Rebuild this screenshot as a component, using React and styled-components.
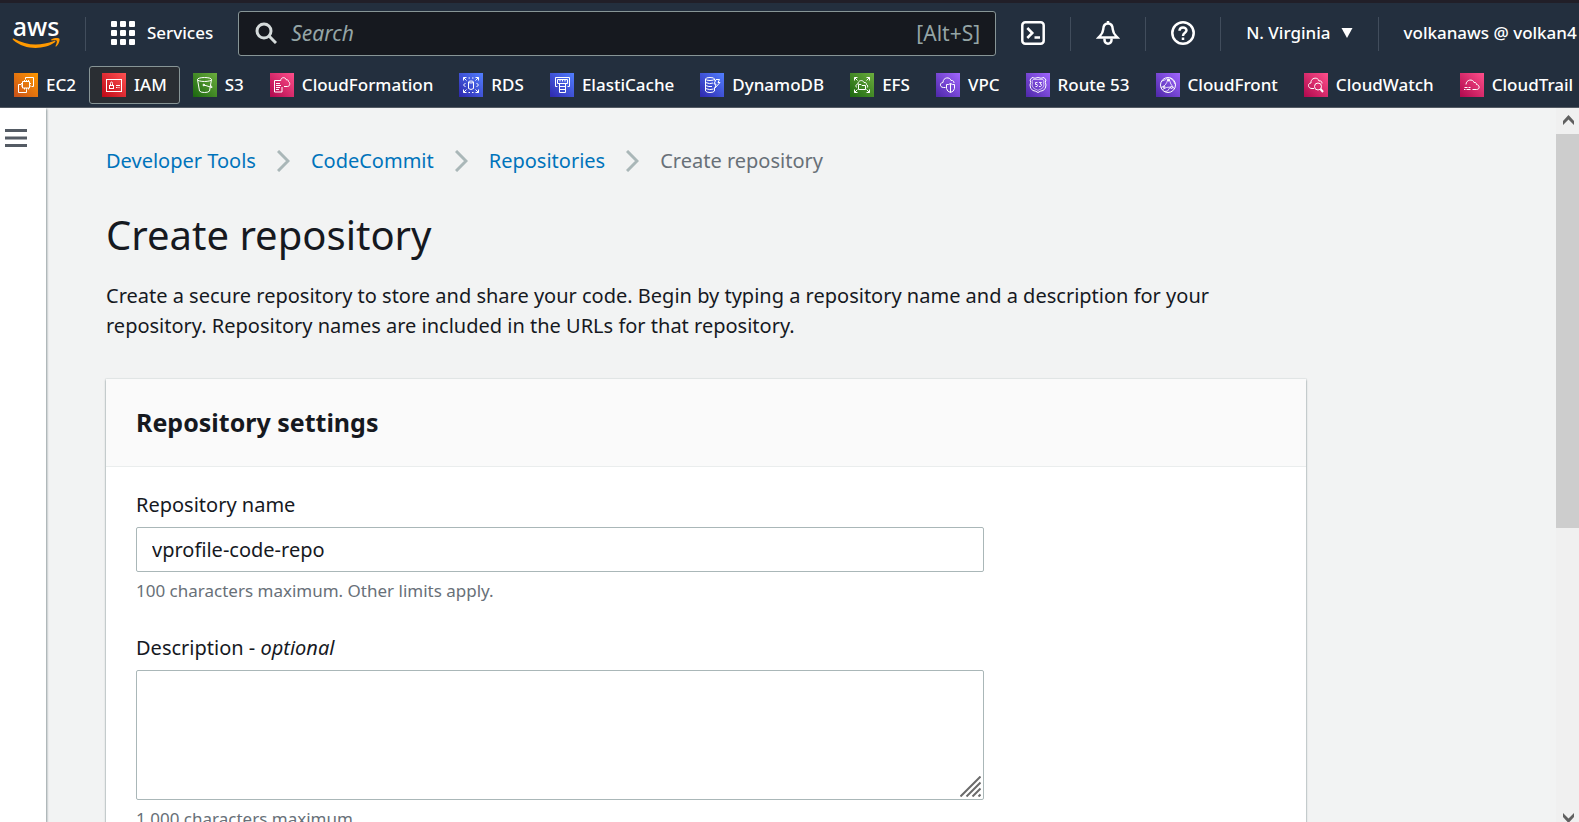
import React, { useState } from "react";
import styled, { createGlobalStyle } from "styled-components";

const GlobalStyle = createGlobalStyle`
  *, *::before, *::after { box-sizing: border-box; }
  html, body, #root { height: 100%; margin: 0; }
  body {
    font-family: "Noto Sans", "Open Sans", sans-serif;
    font-size: 20px;
    line-height: 30px;
    color: #16191f;
    background: #f2f3f3;
    overflow: hidden;
  }
  button, input, textarea { font: inherit; color: inherit; }
`;

const Page = styled.div`
  height: 100%;
  display: flex;
  flex-direction: column;
  overflow: hidden;
`;

/* ---------- header ---------- */

const Header = styled.header`
  flex: none;
  background: #232f3e;
  border-top: 3px solid #211f28;
  border-bottom: 1px solid #545b64;
  color: #fff;
  font-size: 17px;
  font-weight: 500;
  line-height: 24px;
  overflow: hidden;
`;

const TopBar = styled.div`
  display: flex;
  align-items: center;
  padding-top: 8px;
  white-space: nowrap;
`;

const Logo = styled.a`
  display: flex;
  flex-direction: column;
  align-items: center;
  flex: none;
  width: 48px;
  margin: 0 25px 2px 12px;
  color: #fff;
  font-size: 25px;
  line-height: 19px;
  text-decoration: none;
  svg { display: block; margin-top: 2px; }
`;

const Divider = styled.span`
  flex: none;
  width: 1px;
  height: 34px;
  background: #414d5c;
`;

const BarButton = styled.button`
  display: flex;
  align-items: center;
  flex: none;
  gap: ${(p) => p.$gap || 0}px;
  padding: 0 25px 1px;
  border: 0;
  background: none;
  color: #fff;
  cursor: pointer;
  svg { display: block; }
`;

const SearchBox = styled.label`
  display: flex;
  align-items: center;
  flex: 0 0 48%;
  height: 45px;
  padding: 0 15px 2px 16px;
  gap: 14px;
  border: 1px solid #879596;
  border-radius: 3px;
  background: #16191f;
  color: #95a5a6;
  font-size: 21px;
  font-weight: 400;
  svg { flex: none; }
`;

const SearchInput = styled.input`
  flex: 1;
  min-width: 0;
  padding: 0;
  border: 0;
  outline: 0;
  background: none;
  color: #fff;
  &::placeholder { color: #95a5a6; font-style: italic; opacity: 1; }
`;

const Favorites = styled.nav`
  display: flex;
  padding: 10px 0 3px 1px;
  white-space: nowrap;
`;

const Favorite = styled.a`
  display: flex;
  align-items: center;
  flex: none;
  gap: 8px;
  height: 38px;
  padding: 0 12px;
  border: 1px solid ${(p) => (p.$active ? "#879596" : "transparent")};
  border-radius: 3px;
  background: ${(p) => (p.$active ? "#2a2e33" : "transparent")};
  color: #fff;
  text-decoration: none;
`;

const TILE = {
  orange: ["#c8511b", "#f90"],
  red: ["#bd0816", "#ff5252"],
  green: ["#1b660f", "#6cae3e"],
  pink: ["#b0084d", "#ff4f8b"],
  blue: ["#2e27ad", "#527fff"],
  purple: ["#4d27a8", "#a166ff"],
};

const Tile = styled.span`
  display: block;
  width: 24px;
  height: 24px;
  background: linear-gradient(45deg, ${(p) => TILE[p.$tone][0]}, ${(p) => TILE[p.$tone][1]});
  svg { display: block; }
`;

/* ---------- body ---------- */

const Body = styled.div`
  flex: 1;
  min-height: 0;
  display: flex;
`;

const Rail = styled.aside`
  flex: none;
  width: 46px;
  padding: 21px 0 0 5px;
  background: #fff;
  box-shadow: 1px 1px 2px 0 rgba(0, 28, 36, 0.4);
`;

const MenuButton = styled.button`
  display: block;
  padding: 0;
  border: 0;
  background: none;
  cursor: pointer;
  svg { display: block; }
`;

const Main = styled.main`
  flex: 1;
  min-width: 0;
  overflow: hidden;
  padding: 38px 60px 0;
`;

const Content = styled.div`
  max-width: 1200px;
`;

const Crumbs = styled.nav`
  display: flex;
  align-items: center;
  gap: 21px;
  color: #687078;
  a { color: #0073bb; text-decoration: none; }
`;

const Title = styled.h1`
  margin: 34px 0 21px;
  font-size: 40px;
  line-height: 50px;
  font-weight: 400;
`;

const Intro = styled.p`
  margin: 0 0 38px;
`;

const Card = styled.section`
  background: #fff;
  box-shadow: 0 1px 2px 0 rgba(0, 28, 36, 0.5), 0 0 0 1px #eaeded;
`;

const CardHeader = styled.div`
  padding: 27px 30px 28px;
  background: #fafafa;
  border-bottom: 1px solid #eaeded;
`;

const CardTitle = styled.h2`
  margin: 0;
  font-size: 25px;
  line-height: 32px;
  font-weight: 700;
`;

const CardBody = styled.form`
  display: flex;
  flex-direction: column;
  gap: 30px;
  padding: 23px 30px;
`;

const Field = styled.div`
  max-width: 848px;
`;

const Label = styled.label`
  display: block;
  margin-bottom: 7px;
`;

const TextInput = styled.input`
  display: block;
  width: 100%;
  height: 45px;
  padding: 0 15px;
  border: 1px solid #aab7b8;
  border-radius: 2px;
  background: #fff;
  outline: 0;
`;

const AreaWrap = styled.div`
  position: relative;
`;

const TextArea = styled.textarea`
  display: block;
  width: 100%;
  height: 130px;
  padding: 6px 15px;
  border: 1px solid #aab7b8;
  border-radius: 2px;
  background: #fff;
  outline: 0;
  resize: none;
`;

const Grip = styled.svg`
  position: absolute;
  right: 3px;
  bottom: 3px;
`;

const Hint = styled.p`
  margin: 7px 0 0;
  color: #687078;
  font-size: 17px;
  line-height: 24px;
`;

/* ---------- scrollbar ---------- */

const Scrollbar = styled.div`
  flex: none;
  width: 23px;
  display: flex;
  flex-direction: column;
  background: #f0f0f0;
`;

const ScrollArrow = styled.div`
  flex: none;
  height: ${(p) => p.$height}px;
  padding: ${(p) => p.$top}px 0 0 7px;
  overflow: hidden;
  svg { display: block; }
`;

const ScrollThumb = styled.div`
  flex: 197;
  background: #cdcdcd;
`;

const ScrollTrack = styled.div`
  flex: 140;
`;

/* ---------- icons ---------- */

const ServiceIcon = ({ tone, children }) => (
  <Tile $tone={tone}>
    <svg width="24" height="24" viewBox="0 0 24 24" fill="none" stroke="#fff" strokeWidth="1" aria-hidden="true">
      {children}
    </svg>
  </Tile>
);

const cornerArrows = (
  <path d="M4.5 7.5v-3h3M4.5 4.5l3 3M16.5 4.5h3v3M19.5 4.5l-3 3M4.5 16.5v3h3M4.5 19.5l3-3M16.5 19.5h3v-3M19.5 19.5l-3-3" />
);

const services = [
  { name: "EC2", tone: "orange", art: (
    <>
      <path d="M11.5 6.5v-2h8v9h-2M7.5 11.5h-3v8h8v-3" />
      <path d="M8.5 8.5h7v6.5h-7z" />
      <path d="M10.5 7v1.5M12.5 7v1.5M14.5 7v1.5M10.5 15v1.5M12.5 15v1.5M14.5 15v1.5M7 10.5h1.5M7 13h1.5M15.5 10.5h1.5M15.5 13h1.5" />
    </>
  ) },
  { name: "IAM", tone: "red", active: true, art: (
    <>
      <rect x="4.5" y="6.5" width="15" height="12" />
      <rect x="7.5" y="12.5" width="4" height="3" />
      <path d="M8.5 12.5V10.5q0-1.5 1-1.5t1 1.5v2M14 12.5h4M14 14.5h1.5M16.5 14.5h1" />
    </>
  ) },
  { name: "S3", tone: "green", art: (
    <>
      <ellipse cx="11.5" cy="6.5" rx="7" ry="2" />
      <path d="M4.5 6.5l2 11.5q1 1.5 5 1.5t5-1.5l2-11.5" />
      <path d="M11 12l8 2.5q1-.5-2-2.5" />
      <circle cx="10.8" cy="12" r=".8" fill="#fff" />
    </>
  ) },
  { name: "CloudFormation", tone: "pink", art: (
    <>
      <path d="M10 7.5H4.5v11.5h7.500v-5" />
      <path d="M6 10.5h4M6 12.5h5M6 14.5h4M6 16.5h3" />
      <path d="M10.5 8c.5-4.500 5-4 6-1 2-.5 2 1 2 1.500 2 1 1.5 5-1 5h-3.500" />
    </>
  ) },
  { name: "RDS", tone: "blue", art: (
    <>
      {cornerArrows}
      <path d="M9.5 9v6.5q2.5 2 5 0V9" />
      <ellipse cx="12" cy="9" rx="2.5" ry="1" />
      <path d="M6.500 10l-2 2 2 2M17.500 10l2 2-2 2M9.5 5h1.5M13 5h1.5M9.5 19.5h1.5M13 19.5h1.5" />
    </>
  ) },
  { name: "ElastiCache", tone: "blue", art: (
    <>
      <path d="M7.5 13.5h-2v-9h14v9h-2" />
      <path d="M7.5 10.5v-4h10v4h-10M10 6.5v2M12.5 6.5v2M15 6.5v2" />
      <path d="M9.5 10.5v9h6v-9M9.5 13.5h6M9.5 16.5h6" />
    </>
  ) },
  { name: "DynamoDB", tone: "blue", art: (
    <>
      <ellipse cx="10" cy="6" rx="4.5" ry="1.5" />
      <path d="M5.5 6v12q1 1.5 4.5 1.5t4.5-1.5v-3.5M5.5 9.5q4.5 2 7.5.5M5.5 12.5q3.5 1.5 6.5 1M5.5 15.5q4.5 2 8 .5M14.5 6v1.5" />
      <path d="M16 6.5h3.5l-1.5 3h2l-5 5.5 1-4h-2z" />
    </>
  ) },
  { name: "EFS", tone: "green", art: (
    <>
      {cornerArrows}
      <path d="M8.5 16.5v-5h2.5l1 1h3.5v4z" />
      <path d="M7 14.5c-2-1-1-3.5 1-3.5 0-4 5-4.5 6-1.5 2-.5 2.5 1 2.5 2 1.5.5 1.5 3 .5 3" />
    </>
  ) },
  { name: "VPC", tone: "purple", art: (
    <>
      <path d="M9.5 14.5h-2c-4 0-4-5-.5-5 0-5.5 7-6 8-2 2.5-.5 3 1.5 3 2.5" />
      <path d="M14.5 10.5q2 1.500 4 1v4q-.5 3-4 4-3.500-1-4-4v-4q2 .5 4-1zM14.5 10.5v9" />
    </>
  ) },
  { name: "Route 53", tone: "purple", art: (
    <>
      <path d="M6 4.500q3 1.5 6 0 3 1.5 6 0l2 2.5q-1.5 2 0 5 0 4-3 5.5-3 .5-5 2-2-1.5-5-2-3-1.5-3-5.5 1.5-3 0-5z" />
      <path d="M7 6.5h10l1 1.5q-1 2 0 4-.5 3-3 4-2 .5-3 1.5-1-1-3-1.5-2.5-1-3-4 1-2 0-4z" strokeWidth=".6" />
      <path d="M11.5 9.5h-2v2q2-.5 2 1t-2 1M13 9.5h2.5l-1.5 1.5q2 0 1.5 1.5t-2.5 1" strokeWidth=".9" />
    </>
  ) },
  { name: "CloudFront", tone: "purple", art: (
    <>
      <circle cx="12" cy="12" r="7.5" />
      <path d="M6 8q4-1 6-3.5M5 14.5q5-1 7-8.500M13 6q1 5 5.500 10M6.500 16.500q4-3 9-2.500M8 18.500q4 1 6-4M14 5q4 2 5 6" strokeWidth=".8" />
      <circle cx="12.5" cy="7" r="1" fill="#fff" />
      <circle cx="8" cy="14" r="1" />
      <circle cx="15.5" cy="14.5" r="1" />
    </>
  ) },
  { name: "CloudWatch", tone: "pink", art: (
    <>
      <path d="M10 15.5H8c-4.500 0-4.500-5.500-1-5.500-.5-5.500 7-6.500 8-2 2-.5 3 .5 3 2.500" />
      <circle cx="14" cy="13.5" r="3.5" />
      <path d="M16.5 16l2.5 3" strokeWidth="2" />
    </>
  ) },
  { name: "CloudTrail", tone: "pink", art: (
    <path d="M6 11.5c0-5 7-6 8-2 2-.5 2.5 1 2.5 2 3 0 4 5 0 5h-4M4.5 14.5h3M8.5 14.5h2M4 16.5h1.5M6.5 16.5h4" />
  ) },
];

const Smile = () => (
  <svg width="48" height="11" viewBox="0 0 48 11" fill="#ff9900" aria-hidden="true">
    <path d="M.7.8C.9.3 1.5.4 2.2.8 15 8.2 29 7.9 42 3c1.3-.5 2 .5.9 1.3C32 12 13 12.5 1.2 2 .8 1.6.5 1.2.7.8z" />
    <path d="M39.5 1.2C42 0 46.5-.3 47.4.7c.8 1.2-.6 5.8-3.2 7.7-.5.3-.9.1-.7-.4.7-1.7 1.8-4.5 1.2-5.2-.7-.8-3.3-.6-4.9-.4-.7 0-.9-.8-.3-1.2z" />
  </svg>
);

const GridIcon = () => (
  <svg width="24" height="24" viewBox="0 0 24 24" fill="#fff" aria-hidden="true">
    {[0, 9, 18].map((y) => [0, 9, 18].map((x) => <rect key={x + "-" + y} x={x} y={y} width="6" height="6" rx="1" />))}
  </svg>
);

const SearchIcon = () => (
  <svg width="22" height="22" viewBox="0 0 22 22" fill="none" stroke="#d5dbdb" strokeWidth="3" aria-hidden="true">
    <circle cx="9" cy="9" r="7" />
    <path d="M14 14l7 7" />
  </svg>
);

const Line = ({ children }) => (
  <svg width="24" height="24" viewBox="0 0 24 24" fill="none" stroke="#fff" strokeWidth="2.5" aria-hidden="true">
    {children}
  </svg>
);

const Chevron = () => (
  <svg width="13" height="22" viewBox="0 0 13 22" fill="none" stroke="#aab7b8" strokeWidth="3" aria-hidden="true">
    <path d="M1 1l10 10L1 21" />
  </svg>
);

export default function App() {
  const [name, setName] = useState("vprofile-code-repo");

  return (
    <>
      <GlobalStyle />
      <Page>
        <Header>
          <TopBar>
            <Logo href="#">
              aws
              <Smile />
            </Logo>
            <Divider />
            <BarButton type="button" $gap={12}>
              <GridIcon />
              Services
            </BarButton>
            <SearchBox>
              <SearchIcon />
              <SearchInput type="search" placeholder="Search" aria-label="Search" />
              <span>[Alt+S]</span>
            </SearchBox>
            <BarButton type="button" aria-label="CloudShell">
              <Line>
                <rect x="1.3" y="1.3" width="21.4" height="21.4" rx="3" />
                <path d="M6.3 7l5 5-5 5M13.5 16.5h5.500" />
              </Line>
            </BarButton>
            <Divider />
            <BarButton type="button" aria-label="Notifications">
              <Line>
                <path d="M12 0v3M12 2.5C8.5 2.5 7.3 5 7.2 8.5 7 12.5 5.5 13.5 2.5 16.6h19c-3-3.100-4.500-4.100-4.700-8.100C16.700 5 15.5 2.5 12 2.5z" />
                <path d="M8.5 17.5v1.5a3.5 3.7 0 0 0 7 0v-1.5" />
              </Line>
            </BarButton>
            <Divider />
            <BarButton type="button" aria-label="Help">
              <Line>
                <circle cx="12" cy="12" r="10.7" />
                <path d="M8.5 9.8c0-4.5 7-4.3 7-.5 0 2.7-3.5 2.3-3.5 5.7M12 16.5v2.500" />
              </Line>
            </BarButton>
            <Divider />
            <BarButton type="button" $gap={10}>
              N. Virginia
              <svg width="12" height="10" viewBox="0 0 12 10" fill="#fff" aria-hidden="true">
                <path d="M.5 0h11L6 10z" />
              </svg>
            </BarButton>
            <Divider />
            <BarButton type="button">volkanaws @ volkan4</BarButton>
          </TopBar>
          <Favorites aria-label="Favorites">
            {services.map((s) => (
              <Favorite key={s.name} href="#" $active={s.active}>
                <ServiceIcon tone={s.tone}>{s.art}</ServiceIcon>
                {s.name}
              </Favorite>
            ))}
          </Favorites>
        </Header>

        <Body>
          <Rail>
            <MenuButton type="button" aria-label="Open navigation">
              <svg width="22" height="18" viewBox="0 0 22 18" fill="#545b64" aria-hidden="true">
                <path d="M0 0h22v3H0zM0 7.5h22v3H0zM0 15h22v3H0z" />
              </svg>
            </MenuButton>
          </Rail>
          <Main>
            <Content>
              <Crumbs aria-label="Breadcrumbs">
                <a href="#">Developer Tools</a>
                <Chevron />
                <a href="#">CodeCommit</a>
                <Chevron />
                <a href="#">Repositories</a>
                <Chevron />
                <span>Create repository</span>
              </Crumbs>
              <Title>Create repository</Title>
              <Intro>
                Create a secure repository to store and share your code. Begin by typing a repository name and a
                description for your repository. Repository names are included in the URLs for that repository.
              </Intro>
              <Card>
                <CardHeader>
                  <CardTitle>Repository settings</CardTitle>
                </CardHeader>
                <CardBody>
                  <Field>
                    <Label htmlFor="repo-name">Repository name</Label>
                    <TextInput id="repo-name" type="text" value={name} onChange={(e) => setName(e.target.value)} />
                    <Hint>100 characters maximum. Other limits apply.</Hint>
                  </Field>
                  <Field>
                    <Label htmlFor="repo-description">
                      Description - <em>optional</em>
                    </Label>
                    <AreaWrap>
                      <TextArea id="repo-description" />
                      <Grip width="21" height="21" viewBox="0 0 21 21" fill="none" stroke="#6b6b6b" strokeWidth="2" aria-hidden="true">
                        <path d="M.5 20.5l20-20M6.5 20.5l14-14M12.5 20.5l8-8M18.5 20.5l2-2" />
                      </Grip>
                    </AreaWrap>
                    <Hint>1,000 characters maximum</Hint>
                  </Field>
                </CardBody>
              </Card>
            </Content>
          </Main>
          <Scrollbar aria-hidden="true">
            <ScrollArrow $height={26} $top={7}>
              <svg width="11" height="10" viewBox="0 0 11 10" fill="#606060">
                <path d="M0 6l5.5-6L11 6v4L5.5 4.5 0 10z" />
              </svg>
            </ScrollArrow>
            <ScrollThumb />
            <ScrollTrack />
            <ScrollArrow $height={14} $top={5}>
              <svg width="11" height="10" viewBox="0 0 11 10" fill="#606060">
                <path d="M0 4l5.5 6L11 4V0L5.5 5.5 0 0z" />
              </svg>
            </ScrollArrow>
          </Scrollbar>
        </Body>
      </Page>
    </>
  );
}
